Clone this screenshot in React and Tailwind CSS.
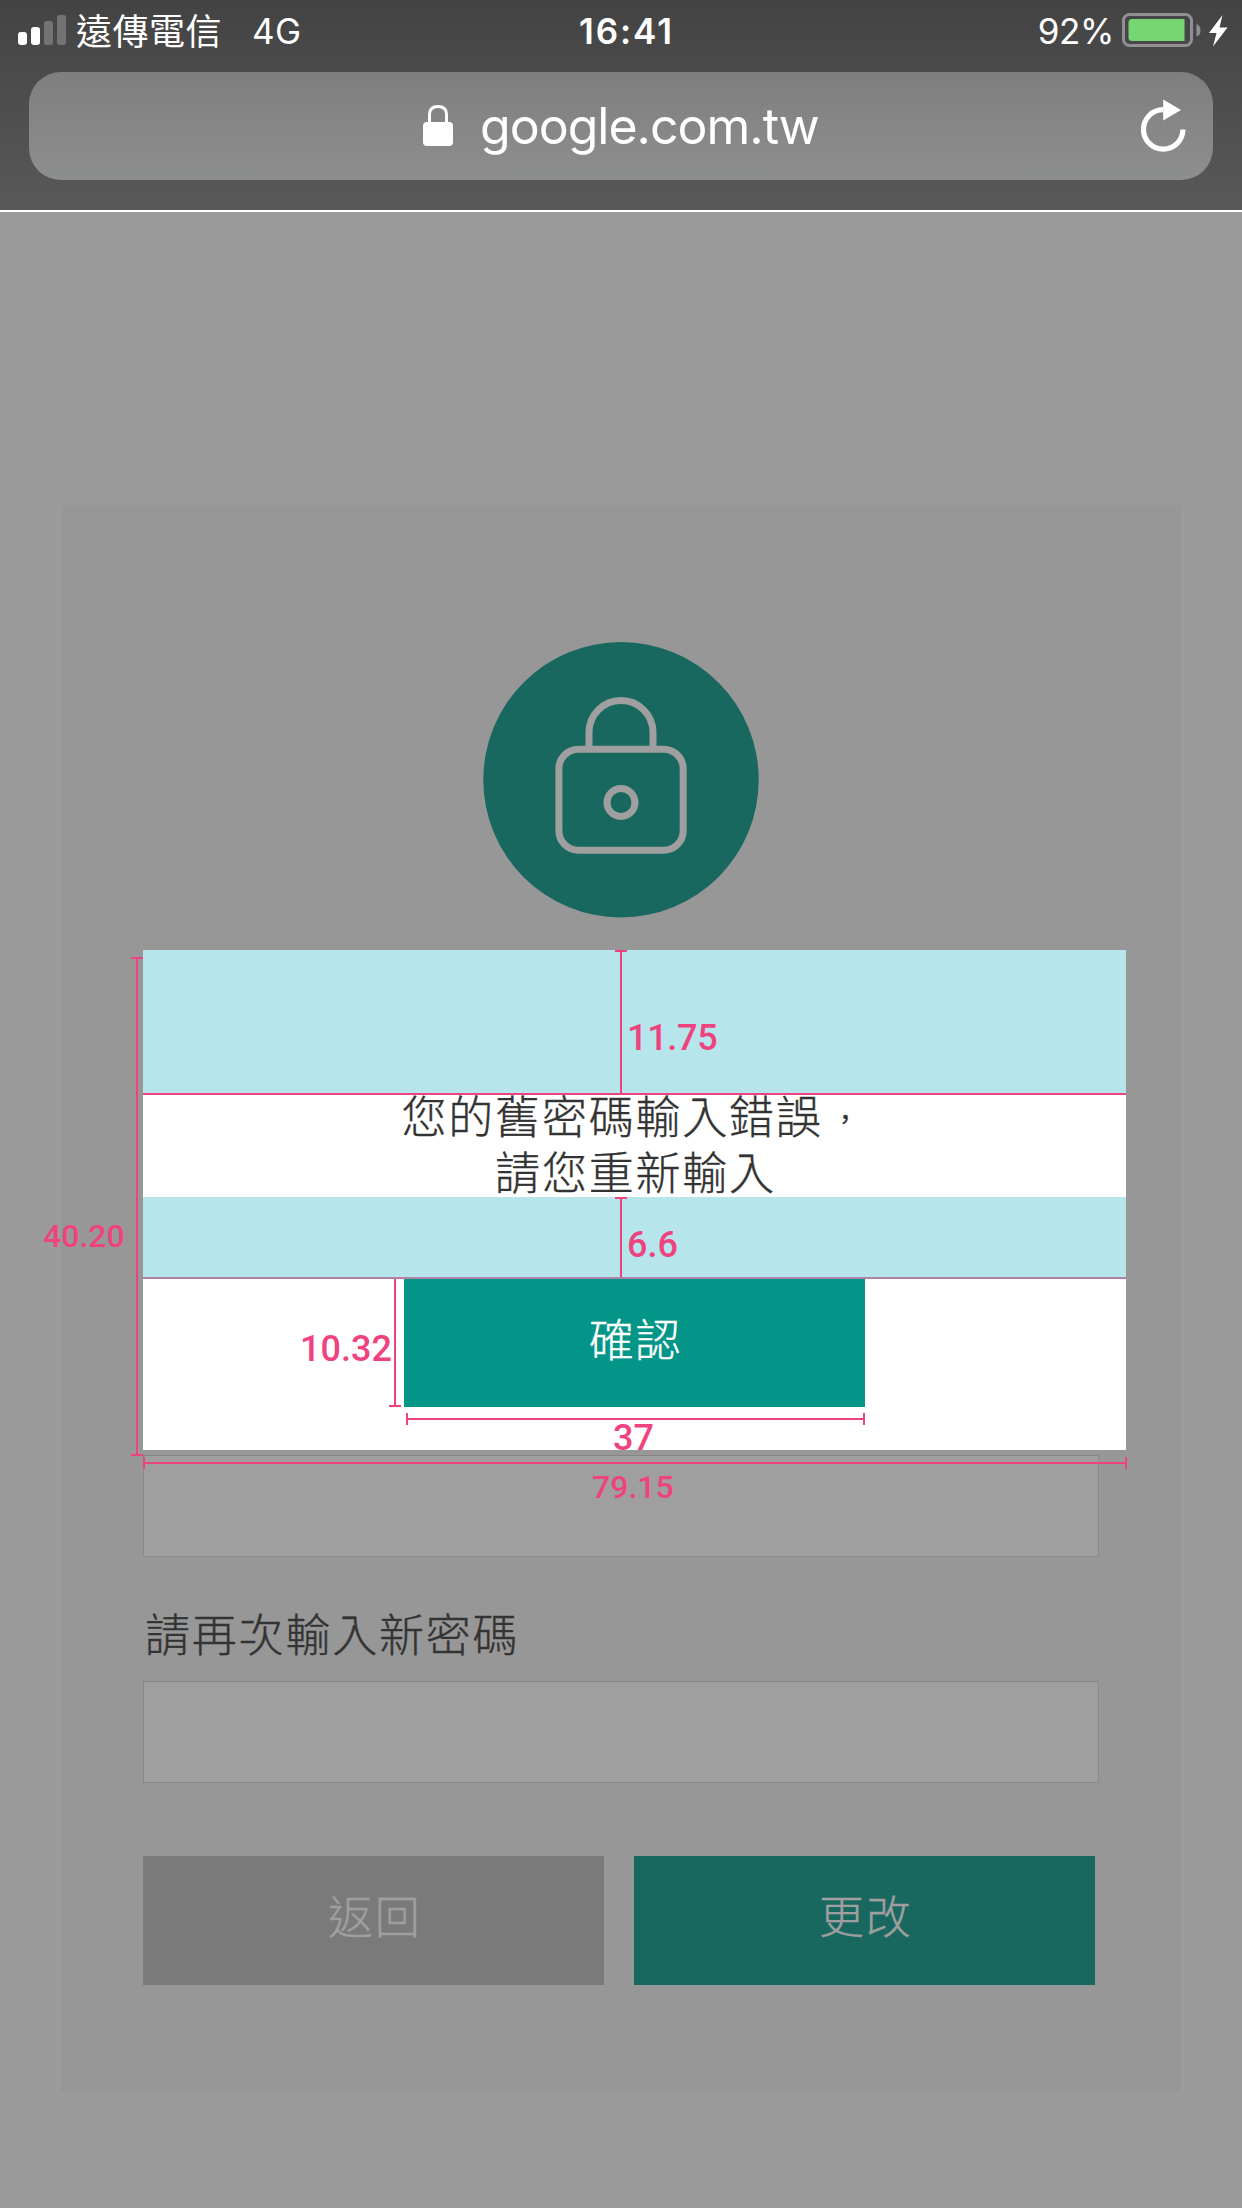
const CJK = "font-['Noto_Sans_CJK_TC',sans-serif] [-webkit-text-stroke:0.35px_currentColor]";

function StatusBar() {
  return (
    <div className="grid h-[72px] grid-cols-[1fr_auto_1fr] items-start pt-[9px] pr-[14px] pl-[18px] text-[35px] leading-[44px] text-white">
      <div className="flex">
        <svg className="mt-[6px] h-[30px] w-[48px] shrink-0" viewBox="0 0 48 30">
          <rect x="0" y="17" width="9" height="13" rx="3" fill="#fff" />
          <rect x="13" y="12" width="9" height="18" rx="3" fill="#fff" />
          <rect x="26" y="6" width="9" height="24" rx="2.5" fill="#737373" />
          <rect x="39" y="0" width="9" height="30" rx="2.5" fill="#737373" />
        </svg>
        <span className="ml-[10px] text-[36px] leading-[41px] tracking-[0.5px] whitespace-nowrap font-['Noto_Sans_CJK_TC',sans-serif]">遠傳電信</span>
        <span className="ml-[30px] tracking-[0.3px]">4G</span>
      </div>
      <span className="pl-[7px] font-semibold tracking-[1.9px]">16:41</span>
      <div className="flex justify-end">
        <span className="mr-[8px] tracking-[-0.4px]">92%</span>
        <svg className="mt-[4px] h-[34px] w-[106px] shrink-0" viewBox="0 0 106 34">
          <rect x="1.5" y="1.5" width="68" height="31" rx="6" fill="none" stroke="#918f93" strokeWidth="3" />
          <path d="M10 6H62.5V28H10Q6.500 28 6.500 24.500V9.500Q6.500 6 10 6Z" fill="#76d672" />
          <path d="M74.500 11Q78.500 12.500 78.500 17.500T74.500 23.500Z" fill="#918f93" />
          <path d="M100.500 2L87 20H94.500L91 33.500L105.500 14.500H97.500Z" fill="#fff" />
        </svg>
      </div>
    </div>
  );
}

function AddressBar() {
  return (
    <div className="mx-[29px] flex h-[108px] items-center rounded-[32px] bg-linear-to-b from-[#7e7e7e] to-[#8d8f8e] pr-[27px] pl-[394px] text-white">
      <svg className="mb-[2px] h-[42px] w-[30px] shrink-0" viewBox="0 0 30 42">
        <path d="M6.500 20V10.500Q6.500 2.500 15 2.500T23.500 10.500V20" fill="none" stroke="#fff" strokeWidth="3" />
        <rect y="18" width="30" height="24" rx="4" fill="#fff" />
      </svg>
      <span className="ml-[27px] grow text-[50px] leading-[60px] tracking-[-1px] whitespace-nowrap">google.com.tw</span>
      <svg className="h-[54px] w-[46px] shrink-0" viewBox="0 0 46 54">
        <path d="M23.200 10.700A19.700 19.700 0 1 0 42.900 30.400" fill="none" stroke="#fff" strokeWidth="5.200" />
        <path d="M23.200 0.500L41 11L23.200 21.500Z" fill="#fff" />
      </svg>
    </div>
  );
}

function LockBadge() {
  return (
    <svg className="h-[276px] w-[276px]" viewBox="483 642 276 276">
      <circle cx="621" cy="779.800" r="137.700" fill="#19685f" />
      <g fill="none" stroke="#9f9f9f" strokeWidth="7">
        <path d="M589 746V732.500A32 32 0 0 1 653 732.500V746" />
        <rect x="558.900" y="749.200" width="124.300" height="101" rx="19.500" />
        <circle cx="621" cy="802.500" r="14" />
      </g>
    </svg>
  );
}

const Input = () => (
  <div className="h-[102px] w-[956px] border border-[#8a8a8a] border-t-[#858585] bg-[#9f9f9f]" />
);

/* Dimension lines with end caps, stretched by their container. */
const VRuler = ({ start = true, end = true }) => (
  <div className="flex w-[12px] shrink-0 flex-col items-center">
    {start && <div className="h-[2px] w-full bg-[#ef437f]" />}
    <div className="w-[2px] grow bg-[#ef437f]" />
    {end && <div className="h-[2px] w-full bg-[#ef437f]" />}
  </div>
);

const HRuler = () => (
  <div className="flex h-[12px] items-center">
    <div className="h-full w-[2px] bg-[#ef437f]" />
    <div className="h-[2px] grow bg-[#ef437f]" />
    <div className="h-full w-[2px] bg-[#ef437f]" />
  </div>
);

const Figure = ({ className, children }) => (
  <span className={`block font-['Roboto',sans-serif] leading-none font-medium whitespace-nowrap text-[#ef437f] ${className}`}>{children}</span>
);

function Dialog() {
  return (
    <div className="absolute top-[950px] left-[143px] flex h-[499.5px] w-[983px] flex-col bg-white">
      <div className="flex h-[145px] shrink-0 border-b-2 border-[#ef437f] bg-[#b7e5ec] pl-[472px]">
        <VRuler end={false} />
        <Figure className="mt-[70px] text-[36px] tracking-[-0.3px]">11.75</Figure>
      </div>
      <div className={`-mt-[8px] h-[110px] shrink-0 pl-[2px] text-center text-[45px] leading-[56px] font-light tracking-[1.8px] whitespace-nowrap text-[#333] ${CJK}`}>
        <p>
          您的舊密碼輸入錯誤<span className="inline-block w-[46.8px] text-center align-[5px] text-[26px] leading-none font-normal">，</span>
        </p>
        <p>請您重新輸入</p>
      </div>
      <div className="flex h-[82px] shrink-0 border-b-2 border-[#ad83ab] bg-[#b7e5ec] pl-[472px]">
        <VRuler end={false} />
        <Figure className="mt-[30px] text-[36px]">6.6</Figure>
      </div>
      <div className="flex h-[128px] shrink-0 pl-[157px]">
        <Figure className="mt-[52px] w-[89px] text-[36px]">10.32</Figure>
        <VRuler start={false} />
        <button className={`ml-[3px] w-[461px] bg-[#039587] pb-[11px] pl-[2px] text-[45px] font-light tracking-[1.8px] text-white ${CJK}`}>確認</button>
      </div>
      <div className="mt-[6px] ml-[263px] w-[459px] shrink-0">
        <HRuler />
        <Figure className="-mt-[5px] ml-[207px] text-[36px]">37</Figure>
      </div>
    </div>
  );
}

/* Overall height and width of the dialog. */
function OuterDimensions() {
  return (
    <>
      <div className="absolute top-[957px] left-[43px] flex h-[499px]">
        <Figure className="mt-[263px] w-[88px] text-[32px]">40.20</Figure>
        <VRuler />
      </div>
      <div className="absolute top-[1457px] left-[143px] w-[984px]">
        <HRuler />
        <Figure className="mt-[2px] ml-[449px] text-[32px]">79.15</Figure>
      </div>
    </>
  );
}

export default function App() {
  return (
    <div className="relative flex h-[2208px] w-[1242px] flex-col overflow-hidden bg-[#9b9b9b] font-['Inter',sans-serif]">
      <header className="h-[212px] shrink-0 border-b-2 border-white bg-linear-to-b from-[#434343] to-[#595959]">
        <StatusBar />
        <AddressBar />
      </header>
      <main className="mx-[61px] mt-[293px] flex h-[1588px] shrink-0 flex-col bg-[#979797] pt-[137px] pr-[82px] pl-[82px]">
        <div className="mb-[537px] flex justify-center">
          <LockBadge />
        </div>
        <Input />
        <label className={`block pt-[46px] pb-[18px] pl-[2px] text-[45px] leading-[60px] font-light tracking-[1.8px] text-[#333] ${CJK}`}>請再次輸入新密碼</label>
        <Input />
        <div className={`flex gap-[30.500px] pt-[73px] text-[45px] font-light tracking-[1.8px] text-[#9f9f9f] ${CJK}`}>
          <button className="h-[129px] w-[460.500px] shrink-0 bg-[#7a7a7a] pb-[12px] pl-[3px]">返回</button>
          <button className="h-[129px] w-[460.500px] shrink-0 bg-[#19685f] pb-[12px] pl-[3px]">更改</button>
        </div>
      </main>
      <Dialog />
      <OuterDimensions />
    </div>
  );
}
